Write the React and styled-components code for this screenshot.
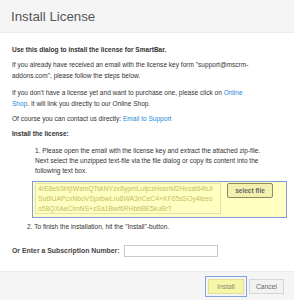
import React from "react";
import styled, { createGlobalStyle } from "styled-components";

const GlobalStyle = createGlobalStyle`
  html, body { margin: 0; padding: 0; background: #fff; }
  body { font-family: "Liberation Sans", Arial, sans-serif; }
`;

const Dialog = styled.div`
  width: 294px;
  height: 300px;
  display: flex;
  flex-direction: column;
  background: #fff;
  overflow: hidden;
`;

const Header = styled.header`
  height: 33px;
  flex: none;
  display: flex;
  align-items: center;
  padding-left: 11px;
  background: #f5f5f5;
  border-bottom: 1px solid #ececec;
  box-sizing: border-box;
`;

const Title = styled.h1`
  margin: 0;
  font-size: 13.3px;
  font-weight: normal;
  color: #555;
`;

const Body = styled.main`
  flex: 1;
  padding: 12px 6px 0 12px;
  font-size: 6.55px;
  line-height: 10.5px;
  color: #333;
  white-space: nowrap;
`;

const P = styled.p`
  margin: 0 0 ${(p) => p.$gap || 4.5}px;
  font-weight: ${(p) => (p.$bold ? "bold" : "normal")};
`;

const Link = styled.a`
  color: #1d8ad6;
  text-decoration: none;
`;

const Step = styled.div`
  padding-left: ${(p) => p.$indent}px;
  line-height: 10px;
`;

const FileBox = styled.div`
  margin: 5px 0 4px 20px;
  width: 255px;
  height: 37px;
  box-sizing: border-box;
  border: 1px solid #7f9cdc;
  background: #ffffc2;
  display: flex;
  align-items: flex-start;
  gap: 6px;
  padding: 1px 2px;
`;

const KeyText = styled.div`
  width: 186px;
  height: 31px;
  box-sizing: border-box;
  border: 1px solid #e4e2a6;
  padding: 0 2px;
  color: #c6bd62;
  font-size: 6.8px;
  line-height: 10px;
  overflow: hidden;
`;

const KeyLine = styled.div``;

const SelectButton = styled.button`
  width: 46px;
  height: 15px;
  padding: 0;
  font-family: inherit;
  font-size: 6.5px;
  font-weight: bold;
  color: #666;
  background: #f4f1b0;
  border: 1px solid #8c8a5c;
  border-radius: 2px;
`;

const SubRow = styled.div`
  margin-top: 13px;
  display: flex;
  align-items: center;
  gap: 4px;
  font-size: 6.9px;
  font-weight: bold;
  color: #444;
`;

const SubInput = styled.input`
  width: 94px;
  height: 12px;
  box-sizing: border-box;
  border: 1px solid #c9c9c9;
  padding: 0;
`;

const Footer = styled.footer`
  height: 29px;
  flex: none;
  display: flex;
  justify-content: flex-end;
  align-items: center;
  gap: 2px;
  padding-right: 10px;
  background: #f5f5f5;
  border-top: 1px solid #ececec;
  box-sizing: border-box;
`;

const PrimaryFrame = styled.div`
  width: 42px;
  height: 21px;
  box-sizing: border-box;
  border: 1px solid #86a2de;
  padding: 2px;
  display: flex;
`;

const PrimaryButton = styled.button`
  flex: 1;
  padding: 0;
  font-family: inherit;
  font-size: 6.8px;
  color: #8a8a6a;
  background: #f6f6a8;
  border: 1px solid #e0e09a;
`;

const CancelButton = styled.button`
  width: 35px;
  height: 15px;
  padding: 0;
  font-family: inherit;
  font-size: 6.8px;
  color: #666;
  background: #f2f2f2;
  border: 1px solid #d6d6d6;
`;

const keyLines = [
  "4rE8eb3lrtjIWsmQTskNYzv8ypmLutjczHosnM2Hvzal64bJr",
  "Su6lUAPcxNboVSpxbwLru8WA3riCeC4+KF65sSOy4leeo",
  "o58QXAeClmNS+zSa1Bwf6RHbbBE5kuBrT",
];

export default function App() {
  return (
    <>
      <GlobalStyle />
      <Dialog>
        <Header>
          <Title>Install License</Title>
        </Header>
        <Body>
          <P $bold>Use this dialog to install the license for SmartBar.</P>
          <P $gap={7}>
            If you already have received an email with the license key form
            "support@mscrm-
            <br />
            addons.com", please follow the steps below.
          </P>
          <P>
            If you don't have a license yet and want to purchase one, please
            click on <Link>Online</Link>
            <br />
            <Link>Shop</Link>. It will link you directly to our Online Shop.
          </P>
          <P>
            Of course you can contact us directly: <Link>Email to Support</Link>
          </P>
          <P $bold $gap={7}>Install the license:</P>
          <Step $indent={23}>
            1. Please open the email with the license key and extract the
            attached zip-file.
            <br />
            Next select the unzipped text-file via the file dialog or copy its
            content into the
            <br />
            following text box.
          </Step>
          <FileBox>
            <KeyText>
              {keyLines.map((l) => (
                <KeyLine key={l}>{l}</KeyLine>
              ))}
            </KeyText>
            <SelectButton>select file</SelectButton>
          </FileBox>
          <Step $indent={15}>
            2. To finish the installation, hit the "Install"-button.
          </Step>
          <SubRow>
            Or Enter a Subscription Number:
            <SubInput />
          </SubRow>
        </Body>
        <Footer>
          <PrimaryFrame>
            <PrimaryButton>Install</PrimaryButton>
          </PrimaryFrame>
          <CancelButton>Cancel</CancelButton>
        </Footer>
      </Dialog>
    </>
  );
}
